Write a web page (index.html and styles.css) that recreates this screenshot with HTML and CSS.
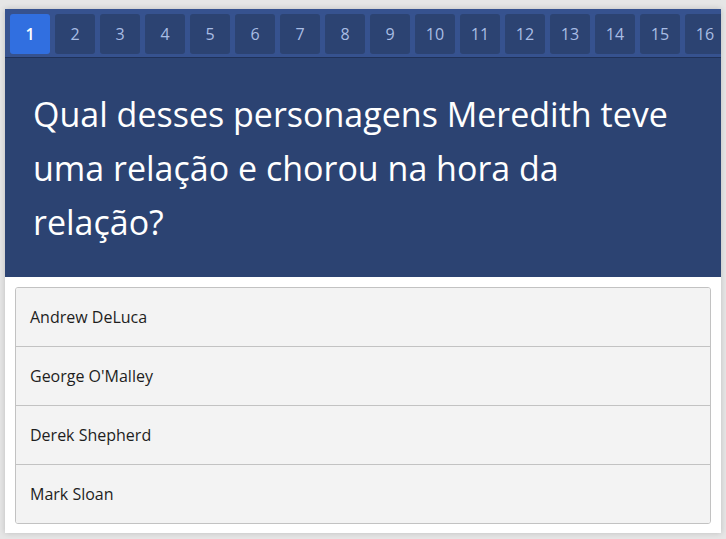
FILE: index.html
```html
<!DOCTYPE html>
<html>
<head>
<meta charset="utf-8">
<link rel="stylesheet" href="styles.css">
</head>
<body>
<div class="card">
  <nav class="steps">
    <span class="step active">1</span>
    <span class="step">2</span>
    <span class="step">3</span>
    <span class="step">4</span>
    <span class="step">5</span>
    <span class="step">6</span>
    <span class="step">7</span>
    <span class="step">8</span>
    <span class="step">9</span>
    <span class="step">10</span>
    <span class="step">11</span>
    <span class="step">12</span>
    <span class="step">13</span>
    <span class="step">14</span>
    <span class="step">15</span>
    <span class="step">16</span>
  </nav>
  <div class="question">Qual desses personagens Meredith teve uma relação e chorou na hora da relação?</div>
  <ul class="options">
    <li>Andrew DeLuca</li>
    <li>George O'Malley</li>
    <li>Derek Shepherd</li>
    <li>Mark Sloan</li>
  </ul>
</div>
</body>
</html>
```

FILE: styles.css
```css
html, body {
  margin: 0;
  padding: 0;
}
body {
  background: #e6e6e6;
  padding: 9px 5px 6px 5px;
  font-family: "Open Sans", "Noto Sans", sans-serif;
}
.card {
  background: #ffffff;
  box-shadow: 0 0 6px rgba(0, 0, 0, 0.18);
  height: 524px;
  overflow: hidden;
}
.steps {
  display: flex;
  gap: 5px;
  padding: 5px 5px 3px 5px;
  background: #36528f;
  border-bottom: 1px solid #1f3158;
  overflow: hidden;
}
.step {
  flex: 0 0 40px;
  height: 40px;
  border-radius: 3px;
  background: #2c4372;
  color: #a9bde4;
  font-size: 16px;
  display: flex;
  align-items: center;
  justify-content: center;
}
.step.active {
  background: #316fe0;
  color: #ffffff;
  font-weight: 600;
}
.question {
  background: #2c4372;
  color: #ffffff;
  font-size: 34px;
  line-height: 54px;
  padding: 29px 38px 28px 28px;
  height: 162px;
}
.options {
  list-style: none;
  margin: 10px 10px 0 10px;
  padding: 0;
  border: 1px solid #c2c2c2;
  border-radius: 3px;
  overflow: hidden;
}
.options li {
  background: #f3f3f3;
  height: 58px;
  line-height: 58px;
  padding-left: 14px;
  font-size: 16px;
  font-weight: 500;
  color: #1e1e1e;
  border-top: 1px solid #c2c2c2;
}
.options li:first-child {
  border-top: none;
}
```
